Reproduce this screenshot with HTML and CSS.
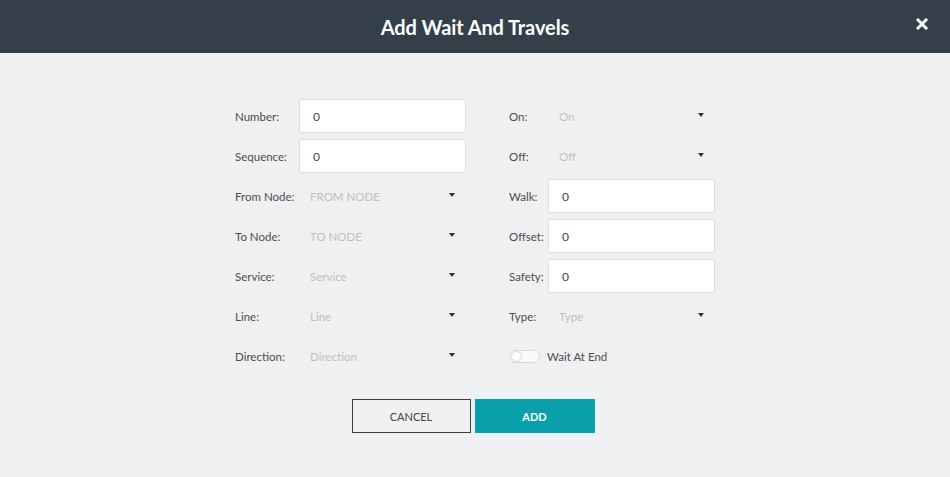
FILE: index.html
```html
<!DOCTYPE html>
<html lang="en">
<head>
<meta charset="utf-8">
<title>Add Wait And Travels</title>
<link rel="stylesheet" href="styles.css">
</head>
<body>
<div class="modal">
  <header class="modal-header">
    <h1 class="modal-title">Add Wait And Travels</h1>
    <button class="close-btn" aria-label="Close">
      <svg width="12" height="12" viewBox="0 0 12 12"><path d="M2 2L10 10M10 2L2 10" stroke="#fff" stroke-width="3" stroke-linecap="square"/></svg>
    </button>
  </header>
  <main class="modal-body">
    <form class="form">
      <div class="columns">
        <div class="col col-left">
          <div class="row"><label class="lbl">Number:</label><input class="field" type="text" value="0"></div>
          <div class="row"><label class="lbl">Sequence:</label><input class="field" type="text" value="0"></div>
          <div class="row"><label class="lbl">From Node:</label><div class="select"><span>FROM NODE</span><i class="caret"></i></div></div>
          <div class="row"><label class="lbl">To Node:</label><div class="select"><span>TO NODE</span><i class="caret"></i></div></div>
          <div class="row"><label class="lbl">Service:</label><div class="select"><span>Service</span><i class="caret"></i></div></div>
          <div class="row"><label class="lbl">Line:</label><div class="select"><span>Line</span><i class="caret"></i></div></div>
          <div class="row"><label class="lbl">Direction:</label><div class="select"><span>Direction</span><i class="caret"></i></div></div>
        </div>
        <div class="col col-right">
          <div class="row"><label class="lbl">On:</label><div class="select"><span>On</span><i class="caret"></i></div></div>
          <div class="row"><label class="lbl">Off:</label><div class="select"><span>Off</span><i class="caret"></i></div></div>
          <div class="row"><label class="lbl">Walk:</label><input class="field" type="text" value="0"></div>
          <div class="row"><label class="lbl">Offset:</label><input class="field" type="text" value="0"></div>
          <div class="row"><label class="lbl">Safety:</label><input class="field" type="text" value="0"></div>
          <div class="row"><label class="lbl">Type:</label><div class="select"><span>Type</span><i class="caret"></i></div></div>
          <div class="row"><span class="toggle"><span class="knob"></span></span><span class="toggle-label">Wait At End</span></div>
        </div>
      </div>
      <div class="actions">
        <button type="button" class="btn btn-cancel">CANCEL</button>
        <button type="button" class="btn btn-add">ADD</button>
      </div>
    </form>
  </main>
</div>
</body>
</html>
```
FILE: styles.css
```css
* { box-sizing: border-box; }

html, body {
  margin: 0;
  padding: 0;
  height: 100%;
}

body {
  font-family: Lato, "Open Sans", sans-serif;
  background: #eff0f2;
  color: #4a4a4a;
}

.modal {
  width: 950px;
  height: 477px;
  display: flex;
  flex-direction: column;
}

.modal-header {
  height: 53px;
  flex: none;
  background: #343f49;
  display: flex;
  align-items: center;
  justify-content: center;
  position: relative;
}

.modal-title {
  margin: 0;
  color: #fff;
  font-size: 20px;
  font-weight: 700;
  letter-spacing: -0.1px;
}

.close-btn {
  position: absolute;
  right: 22px;
  top: 18px;
  width: 12px;
  height: 12px;
  padding: 0;
  border: 0;
  background: none;
  display: flex;
}

.modal-body {
  flex: 1;
  display: flex;
  justify-content: center;
  padding-top: 46px;
}

.form {
  display: flex;
  flex-direction: column;
  align-items: center;
}

.columns {
  display: flex;
  gap: 43px;
}

.col {
  display: flex;
  flex-direction: column;
  gap: 6px;
}

.row {
  display: flex;
  align-items: center;
  height: 34px;
}

.lbl {
  font-size: 11.5px;
  color: #4d4d4d;
  flex: none;
}

.col-left .lbl { width: 64px; }
.col-right .lbl { width: 39px; }

.field {
  width: 167px;
  height: 34px;
  border: 1px solid #dcdcdc;
  border-radius: 2px;
  background: #fff;
  padding: 0 13px;
  font-family: inherit;
  font-size: 12px;
  color: #444;
  outline: none;
}

.select {
  width: 167px;
  height: 34px;
  display: flex;
  align-items: center;
  justify-content: space-between;
  padding: 0 11px;
  font-size: 11.5px;
  color: #bfbfbf;
}

.caret {
  width: 0;
  height: 0;
  border-left: 3.5px solid transparent;
  border-right: 3.5px solid transparent;
  border-top: 4px solid #333;
  margin-top: -3px;
}

.toggle {
  width: 31px;
  height: 13px;
  border: 1px solid #d8d8d8;
  border-radius: 7px;
  background: #fafafa;
  display: flex;
  align-items: center;
  padding-left: 1px;
}

.knob {
  width: 11px;
  height: 11px;
  border-radius: 50%;
  background: #fff;
  border: 1px solid #d5d5d5;
}

.toggle-label {
  margin-left: 7px;
  font-size: 11.5px;
  color: #4d4d4d;
}

.actions {
  display: flex;
  gap: 4px;
  margin-top: 26px;
  margin-left: -4px;
}

.btn {
  height: 34px;
  font-family: inherit;
  font-size: 11px;
  border-radius: 0;
  padding: 0;
}

.btn-cancel {
  width: 119px;
  background: transparent;
  border: 1px solid #3a3f45;
  color: #444;
}

.btn-add {
  width: 120px;
  background: #0aa0ab;
  border: 0;
  color: #fff;
  font-weight: 700;
}
```
